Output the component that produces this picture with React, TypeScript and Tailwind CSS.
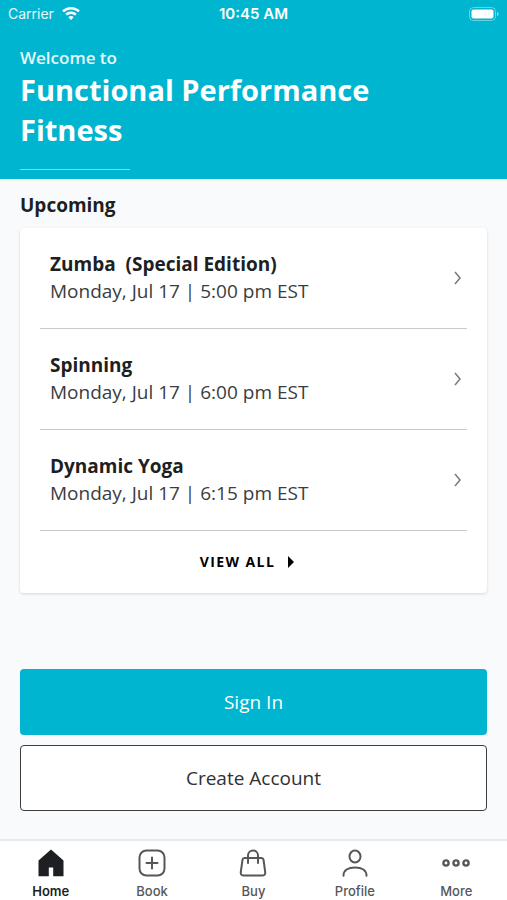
import type { ReactNode } from "react";

interface ClassItem {
  name: string;
  time: string;
}

const UPCOMING: ClassItem[] = [
  { name: "Zumba  (Special Edition)", time: "Monday, Jul 17 | 5:00 pm EST" },
  { name: "Spinning", time: "Monday, Jul 17 | 6:00 pm EST" },
  { name: "Dynamic Yoga", time: "Monday, Jul 17 | 6:15 pm EST" },
];

function StatusBar() {
  return (
    <div className="grid h-7 grid-cols-3 items-center px-2 font-['Inter','Liberation_Sans',sans-serif] text-sm">
      <div className="flex items-center gap-2">
        <span className="text-white/90">Carrier</span>
        <svg viewBox="0 0 18 14" className="h-[14px] w-[18px]" fill="currentColor" aria-label="Wi-Fi">
          <path d="M9 0C5.6 0 2.5 1.3.2 3.5l1.7 1.8A10.200 10.200 0 0 1 9 2.500c2.700 0 5.200 1 7.100 2.800l1.700-1.800A12.700 12.700 0 0 0 9 0Z" />
          <path d="M9 4.500c-2.200 0-4.200.8-5.700 2.200L5 8.500a5.900 5.900 0 0 1 8 0l1.700-1.800A8.300 8.300 0 0 0 9 4.500Z" />
          <path d="M9 8.900c-1 0-1.900.4-2.600 1L9 13.200l2.600-3.300c-.7-.6-1.600-1-2.600-1Z" />
        </svg>
      </div>
      <span className="text-center text-[15px] font-semibold whitespace-nowrap">10:45 AM</span>
      <svg viewBox="0 0 30 14" className="h-[14px] w-[30px] justify-self-end" aria-label="Battery">
        <rect x=".5" y=".5" width="26" height="13" rx="4" fill="none" stroke="white" strokeOpacity=".4" />
        <rect x="2.500" y="2.500" width="22" height="9" rx="2" fill="white" />
        <path d="M28 4.800v4.400c1-.4 1.600-1.200 1.600-2.200S29 5.200 28 4.800Z" fill="white" fillOpacity=".5" />
      </svg>
    </div>
  );
}

function ClassRow({ name, time }: ClassItem) {
  return (
    <li className="border-b border-[#c9cacb]">
      <button type="button" className="flex w-full items-center justify-between py-[23px] pr-[5px] pl-[10px] text-left">
        <span className="flex flex-col text-[19px] leading-[27px]">
          <span className="font-bold whitespace-pre text-[#1d1f22]">{name}</span>
          <span className="text-[#3a3c3f]">{time}</span>
        </span>
        <svg viewBox="0 0 8 14" className="h-[14px] w-2" fill="none" stroke="#77797c" strokeWidth="1.500">
          <path d="M1 1l5 6-5 6" />
        </svg>
      </button>
    </li>
  );
}

function NavItem({ label, active, children }: { label: string; active?: boolean; children: ReactNode }) {
  return (
    <a
      href="#"
      aria-current={active ? "page" : undefined}
      className={
        active
          ? "flex flex-col items-center gap-1 font-semibold text-[#1d1f22]"
          : "flex flex-col items-center gap-1 font-medium text-[#55575b]"
      }
    >
      <svg viewBox="0 0 28 28" className="size-7" fill="none" stroke="currentColor" strokeWidth="2" strokeLinecap="round" strokeLinejoin="round">
        {children}
      </svg>
      <span className="text-[13px] leading-5">{label}</span>
    </a>
  );
}

export default function App() {
  return (
    <div className="flex min-h-screen flex-col bg-[#f8fafc] font-['Open_Sans','Noto_Sans',sans-serif]">
      <header className="bg-[#00b5cf] text-white">
        <StatusBar />
        <div className="px-5 pt-[18px] pb-[9px]">
          <p className="text-[17px] leading-6 font-semibold text-white/90">Welcome to</p>
          <h1 className="max-w-[400px] text-[29px] leading-10 font-bold">Functional Performance Fitness</h1>
          <hr className="mt-[19px] w-[110px] border-white/50" />
        </div>
      </header>

      <main className="flex flex-1 flex-col px-5 pt-3 pb-7">
        <h2 className="text-[19px] leading-7 font-bold text-[#1d1f22]">Upcoming</h2>
        <section className="mt-[9px] rounded-sm bg-white px-5 shadow-[0_1px_3px_rgba(0,0,0,0.15)]">
          <ul>
            {UPCOMING.map(item => (
              <ClassRow key={item.name} name={item.name} time={item.time} />
            ))}
          </ul>
          <button type="button" className="flex h-[62px] w-full items-center justify-center gap-3 pr-3 text-sm font-bold tracking-widest text-black">
            VIEW ALL
            <svg viewBox="0 0 8 12" className="h-3 w-2" fill="currentColor">
              <path d="M1 0l6 6-6 6z" />
            </svg>
          </button>
        </section>

        <div className="mt-auto flex flex-col gap-[10px] pt-10 text-[19px]">
          <button type="button" className="h-[66px] rounded-sm bg-[#00b5cf] text-white">
            Sign In
          </button>
          <button type="button" className="h-[66px] rounded-sm border border-[#3a3c3f] bg-white text-[#2f3134]">
            Create Account
          </button>
        </div>
      </main>

      <nav className="grid h-[61px] grid-cols-5 border-t-2 border-[#e9eaec] bg-white pt-2 font-['Inter','Liberation_Sans',sans-serif]">
        <NavItem label="Home" active>
          <path d="M14 .5 1.500 11.500v15.700H11.800V18.500h4.400v8.700h10.300V11.500Z" fill="currentColor" stroke="none" />
        </NavItem>
        <NavItem label="Book">
          <rect x="1.500" y="1.500" width="25" height="25" rx="7" />
          <path d="M14 8.500v11M8.500 14h11" />
        </NavItem>
        <NavItem label="Buy">
          <path d="M5.500 9h17c1.200 0 1.800.6 2 1.700l1.700 12.300c.3 2.100-.9 3.500-3 3.500H4.800c-2.100 0-3.300-1.400-3-3.500l1.700-12.300C3.700 9.600 4.300 9 5.500 9Z" />
          <path d="M9 14V6.500a5 5 0 0 1 10 0V14" />
        </NavItem>
        <NavItem label="Profile">
          <ellipse cx="14" cy="7.500" rx="5.500" ry="6" />
          <path d="M2.500 26.700c0-5.200 4.500-8.200 11.500-8.200s11.500 3 11.500 8.200" />
        </NavItem>
        <NavItem label="More">
          <circle cx="4" cy="14" r="2.600" strokeWidth="2.400" />
          <circle cx="14" cy="14" r="2.600" strokeWidth="2.400" />
          <circle cx="24" cy="14" r="2.600" strokeWidth="2.400" />
        </NavItem>
      </nav>
    </div>
  );
}
